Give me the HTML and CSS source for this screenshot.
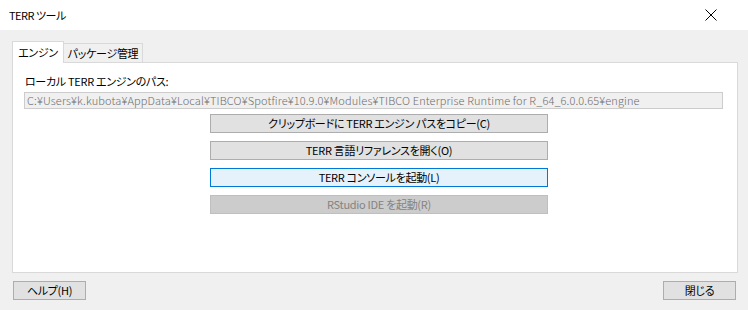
FILE: index.html
```html
<!DOCTYPE html>
<html lang="ja">
<head>
<meta charset="utf-8">
<link rel="stylesheet" href="styles.css">
</head>
<body>
<div class="window">
  <div class="titlebar">
    <span class="title">TERR ツール</span>
    <svg class="close" width="12" height="12" viewBox="0 0 12 12"><path d="M0.5 0.5 L11.5 11.5 M11.5 0.5 L0.5 11.5" stroke="#000" stroke-width="1" fill="none"/></svg>
  </div>
  <div class="body">
    <div class="tabs">
      <div class="tab active">エンジン</div>
      <div class="tab">パッケージ管理</div>
    </div>
    <div class="panel">
      <div class="label">ローカル TERR エンジンのパス:</div>
      <div class="pathbox">C:¥Users¥k.kubota¥AppData¥Local¥TIBCO¥Spotfire¥10.9.0¥Modules¥TIBCO Enterprise Runtime for R_64_6.0.0.65¥engine</div>
      <div class="actions">
        <div class="btn wide">クリップボードに TERR エンジン パスをコピー(C)</div>
        <div class="btn wide">TERR 言語リファレンスを開く(O)</div>
        <div class="btn wide focus">TERR コンソールを起動(L)</div>
        <div class="btn wide disabled">RStudio IDE を起動(R)</div>
      </div>
    </div>
    <div class="footer">
      <div class="btn small">ヘルプ(H)</div>
      <div class="btn small">閉じる</div>
    </div>
  </div>
</div>
</body>
</html>
```
FILE: styles.css
```css
* { box-sizing: border-box; }
html, body { margin: 0; padding: 0; }
body {
  width: 748px;
  height: 310px;
  background: #f0f0f0;
  font-family: "Noto Sans CJK JP", "Noto Sans", sans-serif;
  font-size: 11px;
  font-weight: 400;
  font-feature-settings: "palt";
  letter-spacing: -0.3px;
  color: #000;
  overflow: hidden;
}
.titlebar {
  height: 30px;
  background: #fff;
  display: flex;
  align-items: center;
  justify-content: space-between;
  padding: 0 31px 0 9px;
}
.title { font-size: 11px; line-height: 14px; letter-spacing: -0.5px; }
.close { display: block; }
.body {
  padding: 11px 10px 0 12px;
}
.tabs {
  display: flex;
  align-items: flex-end;
  height: 21px;
  position: relative;
  z-index: 1;
}
.tab {
  height: 19px;
  border: 1px solid #d9d9d9;
  border-bottom: none;
  background: #f0f0f0;
  line-height: 18px;
  white-space: nowrap;
  text-align: center;
  padding: 0;
}
.tab.active {
  width: 52px;
  height: 22px;
  background: #fff;
  margin-bottom: -1px;
  line-height: 20px;
}
.tab:not(.active) { border-left: none; width: 79px; }
.panel {
  height: 211px;
  background: #fff;
  border: 1px solid #d9d9d9;
  padding: 11px 14px 0 11px;
}
.label {
  line-height: 15px;
  height: 17px;
  padding-left: 1px;
  white-space: nowrap;
}
.pathbox {
  height: 17px;
  margin-top: 1px;
  background: #f0f0f0;
  border: 1px solid #cccccc;
  color: #6d6d6d;
  font-size: 11px;
  font-weight: 300;
  line-height: 15px;
  padding-left: 2px;
  white-space: nowrap;
  overflow: hidden;
  letter-spacing: 0.12px;
}
.actions {
  display: flex;
  flex-direction: column;
  gap: 8px;
  margin-top: 5px;
  padding-left: 186px;
}
.btn {
  height: 19px;
  background: #e1e1e1;
  border: 1px solid #adadad;
  text-align: center;
  line-height: 17px;
  white-space: nowrap;
}
.btn.wide { width: 338px; }
.btn.focus { background: #e5f1fb; border-color: #0078d7; }
.btn.disabled { background: #cccccc; border-color: #bfbfbf; color: #838383; }
.footer {
  display: flex;
  justify-content: space-between;
  margin-top: 8px;
  padding: 0 2px 0 1px;
}
.btn.small { width: 73px; }
```
